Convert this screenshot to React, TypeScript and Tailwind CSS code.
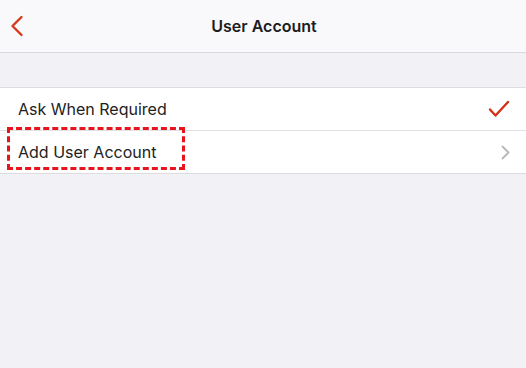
import * as React from "react";

export default function App() {
    return (
        <div className="w-[526px] h-[368px] bg-[#f1f1f6] overflow-hidden" style={{ fontFamily: 'Inter, "Liberation Sans", sans-serif' }}>
            <header className="relative h-[53px] bg-[#f9f9fb] border-b border-[#d9d9dd] flex items-center justify-center">
                <svg className="absolute left-[10px] top-[15px]" width="14" height="22" viewBox="0 0 14 22" fill="none">
                    <path d="M11.5 2 L2.5 11 L11.5 20" stroke="#d6381a" strokeWidth="2.4" strokeLinecap="round" strokeLinejoin="round" />
                </svg>
                <h1 className="text-[16px] font-semibold text-[#1c1c1e] pl-[2px]">User Account</h1>
            </header>
            <div className="h-[35px] border-b border-[#dedee2]" />
            <ul className="bg-white border-b border-[#dcdce0]">
                <li className="h-[43px] flex items-center justify-between pl-[18px] pr-[16px] border-b border-[#e1e1e5]">
                    <span className="text-[16px] text-[#222]">Ask When Required</span>
                    <svg width="22" height="18" viewBox="0 0 22 18" fill="none">
                        <path d="M2 9.5 L7.5 15.5 L20 2" stroke="#d2321a" strokeWidth="2.4" strokeLinecap="round" strokeLinejoin="round" />
                    </svg>
                </li>
                <li className="h-[42px] flex items-center justify-between pl-[18px] pr-[16px]">
                    <span className="relative text-[16px] text-[#222]">
                        Add User Account
                        <span className="absolute left-[-11px] top-[-13px] w-[178px] h-[43px] border-[3px] border-dashed border-[#e8141c]" />
                    </span>
                    <svg width="9" height="15" viewBox="0 0 9 15" fill="none">
                        <path d="M1.5 1.5 L7.5 7.5 L1.5 13.5" stroke="#b8b8bd" strokeWidth="1.8" strokeLinecap="round" strokeLinejoin="round" />
                    </svg>
                </li>
            </ul>
        </div>
    );
}
